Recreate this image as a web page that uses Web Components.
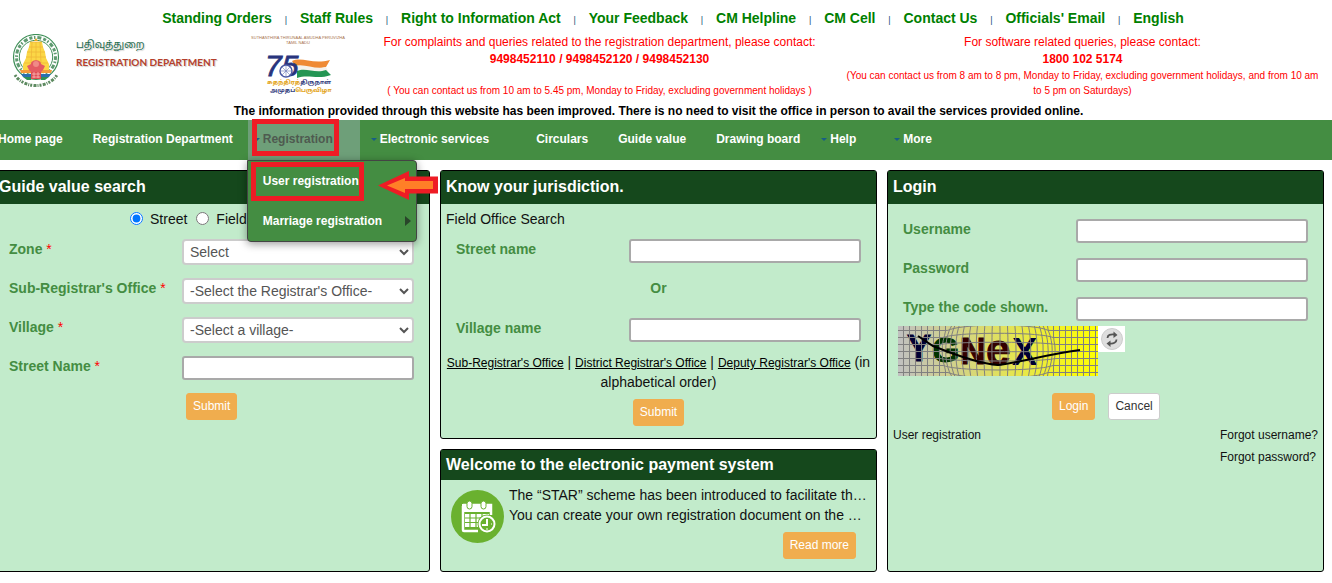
<!DOCTYPE html>
<html lang="en">
<head>
<meta charset="utf-8">
<title>Registration Department</title>
<style>
    body {
        margin: 0;
        background: #ffffff;
        color: #111111;
        font-family: "Liberation Sans", Arial, sans-serif;
        font-size: 14px;
        line-height: 20px;
        overflow-x: hidden;
    }
    main {
        display: grid;
        grid-template-columns: repeat(3, minmax(0, 1fr));
        gap: 10px;
        margin: 10px 8px 10px -7px;
    }
    .stack {
        display: flex;
        flex-direction: column;
        gap: 10px;
    }
</style>
</head>
<body>
    <top-links></top-links>
    <site-header></site-header>
    <main-nav></main-nav>
    <main>
        <panel-card>
            <span slot="title">Guide value search</span>
            <guide-search></guide-search>
        </panel-card>
        <div class="stack">
            <panel-card>
                <span slot="title">Know your jurisdiction.</span>
                <jurisdiction-search></jurisdiction-search>
            </panel-card>
            <panel-card compact>
                <span slot="title">Welcome to the electronic payment system</span>
                <payment-news></payment-news>
            </panel-card>
        </div>
        <panel-card>
            <span slot="title">Login</span>
            <login-form></login-form>
        </panel-card>
    </main>

<script>
    const define = (name, html, setup) => {
        customElements.define(name, class extends HTMLElement {
            constructor() {
                super();
                this.attachShadow({mode: 'open'}).innerHTML = html;
            }
            connectedCallback() {
                if(setup) setup(this, this.shadowRoot);
            }
        });
    };

    define('top-links', `
        <style>
            :host { display: block; }
            nav {
                display: flex;
                justify-content: center;
                padding: 8px 0 3px 14px;
                font-weight: bold;
            }
            a { color: #008000; text-decoration: none; }
            a + a::before {
                content: "|";
                display: inline-block;
                width: 28px;
                text-align: center;
                color: #234f78;
                font-size: 9px;
                font-weight: normal;
            }
        </style>
        <nav></nav>
    `, (host, root) => {
        const links = ['Standing Orders', 'Staff Rules', 'Right to Information Act', 'Your Feedback',
            'CM Helpline', 'CM Cell', 'Contact Us', "Officials' Email", 'English'];
        root.querySelector('nav').innerHTML = links.map(text => `<a href="#">${text}</a>`).join('');
    });

    define('state-emblem', `
        <style>
            :host { display: block; }
            svg { display: block; width: 48px; height: 54px; }
        </style>
        <svg viewBox="0 0 48 54" aria-hidden="true">
            <circle cx="24" cy="23" r="22.5" fill="#fff" stroke="#3f9058" stroke-width="1.2"/>
            <circle cx="24" cy="23" r="19.5" fill="none" stroke="#5f9a70" stroke-width="3" stroke-dasharray="3 1.6 1.5 2 4 2"/>
            <circle cx="24" cy="23" r="16.7" fill="#fff" stroke="#3f9058" stroke-width="1"/>
            <path d="M18 8h12l1 5 2 5 1 6 3 6v7H11v-7l3-6 1-6 2-5z" fill="#fbd746"/>
            <path d="M18 8h12M17 13h14M15 18h18M14 23h20M12 29h24M20 8l-1 21M24 8v21M28 8l1 21" stroke="#f0b838" stroke-width=".8" fill="none"/>
            <path d="M22 7l2-3 2 3z" fill="#e9a823"/>
            <path d="M8 36h11v3H9z" fill="#f49b3b"/>
            <path d="M29 36h11l-1 3H29z" fill="#f49b3b"/>
            <path d="M9 40h10v3h-8zM29 40h10l-2 3h-8z" fill="#2b6fb0"/>
            <path d="M11 43h8v3h-4zM29 43h8l-4 3h-4z" fill="#2f9157"/>
            <path d="M19 30c0-5 10-5 10 0l4 2-2 4-2 2H19l-2-2-2-4z" fill="#e45b62"/>
            <circle cx="24" cy="30" r="3" fill="#f08a86"/>
            <path d="M19 38h10v7H19z" fill="#df4c54"/>
            <path d="M20 40h8M20 43h8M22 38v6M26 38v6" stroke="#fbc9c4" stroke-width=".7"/>
            <path d="M3 41C12 55 36 55 45 41" fill="none" stroke="#fff" stroke-width="4"/>
            <path d="M3 41C12 55 36 55 45 41" fill="none" stroke="#5d8a60" stroke-width="3" stroke-dasharray="2 1.3 3 1 1 1"/>
        </svg>
    `);

    define('jubilee-logo', `
        <style>
            :host { display: block; }
            svg { display: block; width: 100px; height: 66px; }
        </style>
        <svg viewBox="0 0 100 66" role="img" aria-label="75th Independence Day celebration">
            <g fill="#a8734d" font-family="Liberation Sans, sans-serif" text-anchor="middle">
                <text x="50" y="5" font-size="4">SUTHANTHIRA THIRUNAAL AMUDHA PERUVIZHA</text>
                <text x="50" y="10" font-size="4">TAMIL NADU</text>
            </g>
            <path d="M44 27c10-5 20 4 38-1l-4 7c-13 4-23-3-31-1z" fill="#ef8a35"/>
            <path d="M47 32c9-3 20 4 31 1l2 4c-14 3-22-3-32 0z" fill="#f5f2ec"/>
            <path d="M49 37c9-4 18 3 29-1l5 5c-14 5-22-1-34 3z" fill="#249554"/>
            <text x="17" y="42" font-size="30" font-style="italic" font-family="Liberation Sans, sans-serif" fill="#28347d" stroke="#28347d" stroke-width=".8">75</text>
            <circle cx="38" cy="37" r="6" fill="#fff" stroke="#4b59a3" stroke-width="1.5"/>
            <path d="M32 37h12M38 31v12M34 33l8 8M42 33l-8 8" stroke="#6c78b5" stroke-width=".6"/>
            <g font-family="Noto Sans Tamil, Noto Sans, sans-serif" font-weight="bold" font-size="6">
                <text x="19" y="50" fill="#e3a51d">சுதந்திரத்<tspan fill="#35417f">திருநாள்</tspan></text>
                <text x="22" y="58" fill="#35417f">அமுதப்<tspan fill="#e3a51d">பெருவிழா</tspan></text>
            </g>
        </svg>
    `);

    define('site-header', `
        <style>
            :host { display: block; text-align: center; }
            .row {
                display: grid;
                grid-template-columns: 248px 110px 1fr 1fr;
                padding-right: 8px;
                min-height: 69px;
                color: #ff0000;
                font-size: 12px;
                line-height: 17px;
            }
            .brand {
                display: flex;
                gap: 16px;
                padding: 1px 0 0 12px;
                text-align: left;
                font-weight: bold;
                text-shadow: 1px 1px 1px #cccccc;
            }
            .name { padding-top: 4px; line-height: 16px; white-space: nowrap; }
            .tamil { color: #1d6b4b; font-family: "Noto Sans Tamil", "Noto Sans", sans-serif; font-size: 10px; font-weight: normal; }
            .dept { color: #b5402c; font-family: Lato, sans-serif; font-size: 10px; }
            jubilee-logo { padding-top: 1px; }
            .contact { padding-top: 1px; }
            .contact div { line-height: 15px; font-size: 10px; }
            .contact .low { padding-top: 15px; }
            .notice { padding-right: 15px; line-height: 18px; font-size: 12px; font-weight: bold; color: #000000; }
        </style>
        <div class="row">
            <div class="brand">
                <state-emblem></state-emblem>
                <div class="name">
                    <div class="tamil">பதிவுத்துறை</div>
                    <div class="dept">REGISTRATION DEPARTMENT</div>
                </div>
            </div>
            <jubilee-logo></jubilee-logo>
            <div class="contact">
                For complaints and queries related to the registration department, please contact:<br>
                <b>9498452110 / 9498452120 / 9498452130</b>
                <div class="low">( You can contact us from 10 am to 5.45 pm, Monday to Friday, excluding government holidays )</div>
            </div>
            <div class="contact">
                For software related queries, please contact:<br>
                <b>1800 102 5174</b>
                <div>(You can contact us from 8 am to 8 pm, Monday to Friday, excluding government holidays, and from 10 am to 5 pm on Saturdays)</div>
            </div>
        </div>
        <div class="notice">The information provided through this website has been improved. There is no need to visit the office in person to avail the services provided online.</div>
    `);

    define('main-nav', `
        <style>
            :host {
                display: block;
                background: #448d42;
                font-size: 12px;
                font-weight: bold;
            }
            ul { margin: 0; padding: 0; list-style: none; }
            .bar { display: flex; margin-left: -17px; }
            .bar > li { position: relative; white-space: nowrap; }
            a {
                display: block;
                padding: 9px 15px 11px;
                color: #ffffff;
                text-decoration: none;
            }
            .parent { margin-right: 5px; }
            .parent > a { padding-right: 27px; }
            .parent > a::before {
                content: "";
                position: absolute;
                left: 6px;
                top: 18px;
                border: 3px solid transparent;
                border-top-color: #175d86;
                border-bottom: 0;
            }
            .open > a { background: #6e9f79; color: #4e5a50; }
            .menu {
                position: absolute;
                z-index: 5;
                top: 40px;
                left: -1px;
                width: 168px;
                background: #448d42;
                border: 1px solid #444444;
                border-radius: 0 4px 4px 4px;
                box-shadow: 0 2px 8px #00000066;
            }
            .menu li { position: relative; }
            .menu a { padding: 10px 15px; }
            .menu .more::after {
                content: "";
                position: absolute;
                right: 5px;
                top: 15px;
                border: 5px solid transparent;
                border-left: 6px solid #29452a;
                border-right: 0;
            }
            .mark {
                position: absolute;
                z-index: 6;
                box-sizing: border-box;
                border: 5px solid #ee1c25;
                pointer-events: none;
            }
            .mark.tab { left: 4px; top: -1px; width: 87px; height: 37px; }
            .mark.item { left: 3px; top: 42px; width: 113px; height: 39px; }
            .pointer { position: absolute; z-index: 6; left: 129px; top: 50px; width: 62px; height: 31px; }
        </style>
        <nav>
            <ul class="bar">
                <li><a href="#">Home page</a></li>
                <li><a href="#">Registration Department</a></li>
                <li class="parent open">
                    <a href="#">Registration</a>
                    <ul class="menu">
                        <li><a href="#">User registration</a></li>
                        <li class="more"><a href="#">Marriage registration</a></li>
                    </ul>
                    <span class="mark tab"></span>
                    <span class="mark item"></span>
                    <svg class="pointer" viewBox="0 0 62 31" aria-hidden="true">
                        <path d="M1 15.500L32 1v5.500h29v17H32V30z" fill="#ee1c25"/>
                        <path d="M10 15.500L28 8v3h28v8H28v4z" fill="#ff7f27"/>
                    </svg>
                </li>
                <li class="parent"><a href="#">Electronic services</a></li>
                <li><a href="#">Circulars</a></li>
                <li><a href="#">Guide value</a></li>
                <li><a href="#">Drawing board</a></li>
                <li class="parent"><a href="#">Help</a></li>
                <li class="parent"><a href="#">More</a></li>
            </ul>
        </nav>
    `);

    define('panel-card', `
        <style>
            :host {
                display: block;
                background: #c2ebcb;
                border: 1px solid #000000;
                border-radius: 3px;
            }
            h2 {
                margin: 0;
                padding: 5px 5px 6px;
                background: #15481c;
                color: #ffffff;
                font-size: 16px;
                line-height: 22px;
            }
            :host([compact]) h2 { padding: 4px 5px; }
        </style>
        <h2><slot name="title"></slot></h2>
        <slot></slot>
    `);

    // Label on the left, text box or drop-down on the right.
    define('form-field', `
        <style>
            :host { display: block; padding-left: 15px; }
            .field {
                display: flex;
                justify-content: space-between;
                margin: 0 15px 15px 0;
            }
            label { font-weight: bold; color: #448d42; }
            label b { color: #ff0000; font-weight: normal; }
            input, select {
                box-sizing: border-box;
                width: 232px;
                height: 24px;
                border: 2px solid #a9a9a9;
                border-radius: 3px;
                background: #ffffff;
                color: #555555;
                font: inherit;
            }
            select {
                height: 26px;
                margin-bottom: -2px;
                padding: 0 2px;
                border-color: #cccccc;
                border-radius: 4px;
            }
        </style>
        <div class="field"><label for="control"></label></div>
    `, (host, root) => {
        const label = root.querySelector('label');
        const option = host.getAttribute('option');
        const control = document.createElement(option ? 'select' : 'input');
        control.id = 'control';
        label.textContent = host.getAttribute('label');
        if(host.hasAttribute('required')) label.insertAdjacentHTML('beforeend', ' <b>*</b>');
        if(option) control.add(new Option(option));
        else control.type = host.getAttribute('type') || 'text';
        root.querySelector('.field').appendChild(control);
    });

    define('action-button', `
        <style>
            :host { display: inline-block; }
            button {
                display: block;
                padding: 5px 6px;
                border: 1px solid #f0ad4e;
                border-radius: 3px;
                background: #f0ad4e;
                color: #ffffff;
                font: inherit;
                font-size: 12px;
                line-height: 15px;
            }
            :host([plain]) button { background: #ffffff; border-color: #cccccc; color: #333333; }
        </style>
        <button type="button"><slot></slot></button>
    `);

    define('guide-search', `
        <style>
            :host { display: block; }
            .kind {
                display: flex;
                align-items: center;
                gap: 6px;
                padding: 5px 0 10px 135px;
            }
            .kind input { margin: 0 1px 2px 1px; }
            .kind label { margin-right: 2px; }
            action-button { margin: -3px 0 0 192px; }
        </style>
        <div class="kind">
            <input type="radio" name="kind" id="street" checked><label for="street">Street</label>
            <input type="radio" name="kind" id="field"><label for="field">Field</label>
        </div>
        <form-field label="Zone" option="Select" required></form-field>
        <form-field label="Sub-Registrar's Office" option="-Select the Registrar's Office-" required></form-field>
        <form-field label="Village" option="-Select a village-" required></form-field>
        <form-field label="Street Name" required></form-field>
        <action-button>Submit</action-button>
    `);

    define('jurisdiction-search', `
        <style>
            :host { display: block; padding: 5px 0 12px; text-align: center; }
            .intro { padding: 0 5px 10px; text-align: left; }
            .or { padding-bottom: 20px; font-weight: bold; color: #448d42; }
            .offices { padding: 0 5px 7px; margin-top: -5px; }
            a { color: #000000; font-size: 12px; line-height: 16px; }
            form-field { text-align: left; }
        </style>
        <div class="intro">Field Office Search</div>
        <form-field label="Street name"></form-field>
        <div class="or">Or</div>
        <form-field label="Village name"></form-field>
        <div class="offices">
            <a href="#">Sub-Registrar's Office</a> |
            <a href="#">District Registrar's Office</a> |
            <a href="#">Deputy Registrar's Office</a> (in alphabetical order)
        </div>
        <action-button>Submit</action-button>
    `);

    define('payment-news', `
        <style>
            :host { display: block; padding: 5px 8px 12px 10px; }
            .news { display: flex; gap: 5px; }
            svg { flex: none; width: 53px; height: 53px; margin-top: 5px; }
            .text { flex: 1; min-width: 0; }
            p { margin: 0; white-space: nowrap; }
            .end { margin: 7px 12px 0 0; text-align: right; }
            action-button { vertical-align: top; }
        </style>
        <div class="news">
            <svg viewBox="0 0 53 53" aria-hidden="true">
                <circle cx="26.500" cy="26.500" r="26.500" fill="#6ab12f"/>
                <path d="M12 15h28v10M27 41H13a1 1 0 0 1-1-1V16" fill="none" stroke="#fff" stroke-width="2.500"/>
                <path d="M11 14h30v8H11z" fill="#fff"/>
                <g stroke="#6ab12f" stroke-width="1" fill="#fff">
                    <rect x="16" y="11" width="5" height="8" rx="2.500"/>
                    <rect x="30" y="11" width="5" height="8" rx="2.500"/>
                </g>
                <path d="M14 24h24v13H14z" fill="#fff"/>
                <path d="M14 28h23M14 32.500h23M19 24v13M25 24v13M31 24v13" stroke="#6ab12f" stroke-width="1.200"/>
                <circle cx="36" cy="34" r="9.500" fill="#6ab12f"/>
                <circle cx="36" cy="34" r="7.500" fill="#6ab12f" stroke="#fff" stroke-width="2"/>
                <path d="M36 29v6h-5" fill="none" stroke="#fff" stroke-width="2"/>
                <path d="M36 38v2M40 34h1" stroke="#fff" stroke-width="1"/>
            </svg>
            <div class="text">
                <p>The “STAR” scheme has been introduced to facilitate th…</p>
                <p>You can create your own registration document on the …</p>
                <div class="end"><action-button>Read more</action-button></div>
            </div>
        </div>
    `);

    define('captcha-picture', `
        <style>
            :host { display: block; }
            svg { display: block; width: 200px; height: 50px; }
        </style>
        <svg viewBox="0 0 200 50" role="img" aria-label="Verification code">
            <defs>
                <linearGradient id="shade">
                    <stop offset="0" stop-color="#c0c0c0"/>
                    <stop offset="1" stop-color="#ffff00"/>
                </linearGradient>
            </defs>
            <rect width="200" height="50" fill="url(#shade)"/>
            <g font-family="Liberation Sans, sans-serif" font-weight="bold">
                <text x="9" y="35" font-size="36" fill="#000033" stroke="#000033">Y</text>
                <text x="34" y="36" font-size="35" fill="#003300" stroke="#003300">G</text>
                <text x="62" y="38" font-size="36" fill="#330000" stroke="#330000">N</text>
                <text x="88" y="39" font-size="44" fill="#330000" stroke="#330000">e</text>
                <text x="114" y="39" font-size="38" fill="#000033">X</text>
            </g>
            <path class="grid" fill="none" stroke="#808080" stroke-width="1"/>
            <path d="M20 10L35 20C60 30 85 38 100 39C125 36 145 29 182 24" fill="none" stroke="#000" stroke-width="2"/>
        </svg>
    `, (host, root) => {
        // Bulge the grid outwards around the middle of the picture.
        const bend = (x, y) => {
            const dx = (x - 100) / 58;
            const dy = (y - 25) / 42;
            const force = Math.max(0, 1 - dx * dx - dy * dy) * 0.35;
            return `${(x + (x - 100) * force).toFixed(1)} ${(y + (y - 25) * force).toFixed(1)}`;
        };
        let d = '';
        for(let x = 5.5; x < 200; x += 6) {
            for(let y = 0; y <= 50; y += 5) d += (y ? 'L' : 'M') + bend(x, y);
        }
        for(let y = 4.5; y < 50; y += 7) {
            for(let x = 0; x <= 200; x += 5) d += (x ? 'L' : 'M') + bend(x, y);
        }
        root.querySelector('.grid').setAttribute('d', d);
    });

    define('login-form', `
        <style>
            :host { display: block; padding: 15px 0 12px; }
            .captcha { display: flex; align-items: flex-start; margin: -10px 0 17px 10px; }
            .refresh { padding: 0; border: 0; background: #ffffff; line-height: 0; }
            .refresh svg { width: 27px; height: 26px; }
            .buttons { display: flex; gap: 13px; padding-left: 164px; }
            .links { display: flex; justify-content: space-between; padding: 4px 5px 0; font-size: 12px; line-height: 22px; }
            .links div { display: flex; flex-direction: column; }
            a { color: #111111; text-decoration: none; }
        </style>
        <form-field label="Username"></form-field>
        <form-field label="Password" type="password"></form-field>
        <form-field label="Type the code shown."></form-field>
        <div class="captcha">
            <captcha-picture></captcha-picture>
            <button class="refresh" type="button" aria-label="New code">
                <svg viewBox="0 0 27 26" aria-hidden="true">
                    <circle cx="14" cy="13" r="10.500" fill="#dedede" stroke="#cccccc"/>
                    <path d="M9.500 12c0-3 3-4 7-3.500M18.500 13.500c0 3-3 4.500-7 4" fill="none" stroke="#555555" stroke-width="1.800"/>
                    <path d="M15.500 5.500l4 3.500-4 3zM12.500 14.500l-4 3 4 3.500z" fill="#555555"/>
                </svg>
            </button>
        </div>
        <div class="buttons">
            <action-button>Login</action-button>
            <action-button plain>Cancel</action-button>
        </div>
        <div class="links">
            <a href="#">User registration</a>
            <div>
                <a href="#">Forgot username?</a>
                <a href="#">Forgot password?</a>
            </div>
        </div>
    `);
</script>
</body>
</html>
